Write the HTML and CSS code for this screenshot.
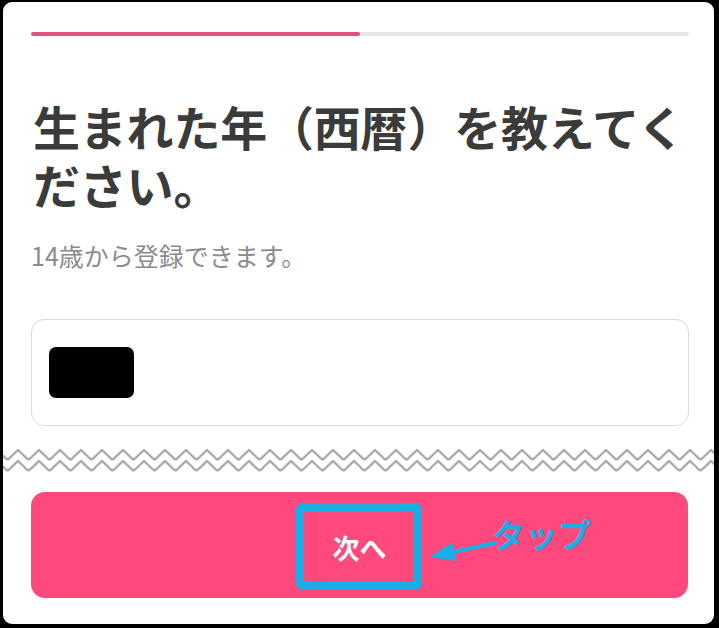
FILE: index.html
```html
<!DOCTYPE html>
<html lang="ja">
<head>
<meta charset="utf-8">
<link rel="stylesheet" href="styles.css">
</head>
<body>
<div class="frame">
  <div class="top">
    <div class="progress"><div class="progress-fill"></div></div>
    <h1 class="title">生まれた年（西暦）を教えてください。</h1>
    <p class="sub">14歳から登録できます。</p>
    <div class="field"><div class="redact"></div></div>
  </div>
  <svg class="zigzag" width="711" height="26" viewBox="0 0 711 26">
    <defs>
      <pattern id="zz" x="4.5" y="0" width="21" height="26" patternUnits="userSpaceOnUse">
        <path d="M0 12 L10.5 2 L21 12 M0 23 L10.5 13 L21 23" stroke="#a3a3a3" stroke-width="2.2" fill="none"/>
      </pattern>
    </defs>
    <rect x="0" y="0" width="711" height="26" fill="url(#zz)"/>
  </svg>
  <div class="bottom">
    <div class="button">
      <span class="button-label">次へ</span>
      <div class="highlight"></div>
      <svg class="arrow" width="75" height="36" viewBox="0 0 75 36">
        <line x1="24" y1="20.5" x2="68" y2="11" stroke="#19aee8" stroke-width="4" stroke-linecap="round"/>
        <polygon points="3,25 25,10.5 29,29" fill="#19aee8"/>
      </svg>
      <span class="tap">タップ</span>
    </div>
  </div>
</div>
</body>
</html>
```
FILE: styles.css
```css
html, body {
  margin: 0;
  padding: 0;
  background: #000;
  width: 719px;
  height: 628px;
  overflow: hidden;
}
.frame {
  margin: 2px 5px 0 3px;
  width: 711px;
  height: 622px;
  background: #fff;
  border-radius: 9px;
  font-family: "Noto Sans CJK JP", "Noto Sans", sans-serif;
  overflow: hidden;
}
.top {
  padding: 30px 25px 0 28px;
}
.progress {
  height: 4px;
  background: #e6e6e8;
  border-radius: 2px;
  display: flex;
}
.progress-fill {
  width: 329px;
  background: #e2527f;
  border-radius: 2px;
}
.title {
  margin: 61px 0 0 2px;
  font-size: 47px;
  line-height: 58px;
  font-weight: 700;
  color: #3b3b3b;
  letter-spacing: -0.2px;
}
.sub {
  margin: 27px 0 0 0;
  font-size: 25px;
  line-height: 30px;
  color: #8b8b8f;
}
.field {
  margin-top: 49px;
  height: 105px;
  border: 1px solid #dcdcdc;
  border-radius: 13px;
  display: flex;
  align-items: center;
  padding-left: 17px;
}
.redact {
  width: 85px;
  height: 51px;
  background: #000;
  border-radius: 7px;
}
.zigzag {
  display: block;
  margin-top: 22px;
}
.bottom {
  padding: 18px 26px 0 28px;
}
.button {
  position: relative;
  height: 106px;
  background: #ff487b;
  border-radius: 14px;
  display: flex;
  align-items: center;
  justify-content: center;
}
.button-label {
  color: #fff;
  font-size: 27px;
  font-weight: 700;
  margin-top: 4px;
}
.highlight {
  position: absolute;
  left: 265px;
  top: 11px;
  width: 110px;
  height: 71px;
  border: 8px solid #19aee8;
  border-radius: 7px;
}
.arrow {
  position: absolute;
  left: 396px;
  top: 40px;
}
.tap {
  position: absolute;
  left: 461px;
  top: 22px;
  font-size: 33px;
  line-height: 40px;
  font-weight: 700;
  color: #19aee8;
}
```
